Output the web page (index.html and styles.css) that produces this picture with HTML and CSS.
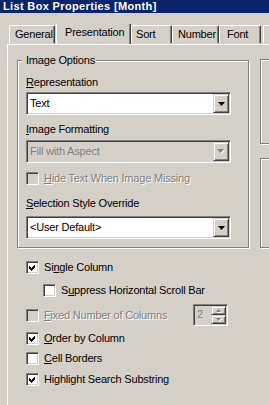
FILE: index.html
```html
<!DOCTYPE html>
<html lang="en">

<head>
    <meta charset="UTF-8">
    <title>List Box Properties [Month]</title>
    <link rel="stylesheet" href="styles.css">
</head>

<body>
    <div class="title-bar">List Box Properties [Month]</div>

    <div class="tabs">
        <div class="tab tab-general">General</div>
        <div class="tab tab-presentation active">Presentation</div>
        <div class="tab tab-sort">Sort</div>
        <div class="tab tab-number">Number</div>
        <div class="tab tab-font">Font</div>
        <div class="tab tab-more"></div>
    </div>

    <div class="panel">
        <div class="left-col">
            <div class="group image-options">
                <span class="group-title">Image Options</span>

                <div class="label label-rep"><u>R</u>epresentation</div>
                <div class="combo combo-rep">
                    <span class="combo-text">Text</span>
                    <span class="combo-btn">
                        <svg width="7" height="4" viewBox="0 0 7 4"><polygon points="0,0 7,0 3.5,4" fill="#000"/></svg>
                    </span>
                </div>

                <div class="label label-fmt"><u>I</u>mage Formatting</div>
                <div class="combo combo-fmt disabled">
                    <span class="combo-text">Fill with Aspect</span>
                    <span class="combo-btn">
                        <svg width="8" height="5" viewBox="0 0 8 5"><polygon points="1,1 8,1 4.5,5" fill="#fff"/><polygon points="0,0 7,0 3.5,4" fill="#808080"/></svg>
                    </span>
                </div>

                <div class="check-row row-hide disabled">
                    <span class="checkbox"></span>
                    <span class="check-text"><u>H</u>ide Text When Image Missing</span>
                </div>

                <div class="label label-sel"><u>S</u>election Style Override</div>
                <div class="combo combo-sel">
                    <span class="combo-text">&lt;User Default&gt;</span>
                    <span class="combo-btn">
                        <svg width="7" height="4" viewBox="0 0 7 4"><polygon points="0,0 7,0 3.5,4" fill="#000"/></svg>
                    </span>
                </div>
            </div>

            <div class="options">
                <div class="check-row row-single">
                    <span class="checkbox">
                        <svg width="7" height="7" viewBox="0 0 7 7" shape-rendering="crispEdges"><polygon points="0,2 2,4 6,0 6,3 2,7 0,5" fill="#000"/></svg>
                    </span>
                    <span class="check-text">Si<u>n</u>gle Column</span>
                </div>
                <div class="check-row row-suppress">
                    <span class="checkbox"></span>
                    <span class="check-text">S<u>u</u>ppress Horizontal Scroll Bar</span>
                </div>
                <div class="check-row row-fixed disabled">
                    <span class="checkbox"></span>
                    <span class="check-text"><u>F</u>ixed Number of Columns</span>
                    <div class="spin">
                        <span class="spin-value">2</span>
                        <div class="spin-btns">
                            <span class="spin-btn">
                                <svg width="6" height="4" viewBox="0 0 6 4"><polygon points="3,1 6,4 1,4" fill="#fff"/><polygon points="2.5,0 5,3 0,3" fill="#808080"/></svg>
                            </span>
                            <span class="spin-btn">
                                <svg width="6" height="4" viewBox="0 0 6 4"><polygon points="1,1 6,1 3.5,4" fill="#fff"/><polygon points="0,0 5,0 2.5,3" fill="#808080"/></svg>
                            </span>
                        </div>
                    </div>
                </div>
                <div class="check-row row-order">
                    <span class="checkbox">
                        <svg width="7" height="7" viewBox="0 0 7 7" shape-rendering="crispEdges"><polygon points="0,2 2,4 6,0 6,3 2,7 0,5" fill="#000"/></svg>
                    </span>
                    <span class="check-text"><u>O</u>rder by Column</span>
                </div>
                <div class="check-row row-cell">
                    <span class="checkbox"></span>
                    <span class="check-text"><u>C</u>ell Borders</span>
                </div>
                <div class="check-row row-highlight">
                    <span class="checkbox">
                        <svg width="7" height="7" viewBox="0 0 7 7" shape-rendering="crispEdges"><polygon points="0,2 2,4 6,0 6,3 2,7 0,5" fill="#000"/></svg>
                    </span>
                    <span class="check-text">Highlight Search Substring</span>
                </div>
            </div>
        </div>

        <div class="right-col">
            <div class="group side-a"></div>
            <div class="group side-b"></div>
        </div>
    </div>
</body>

</html>
```

FILE: styles.css
```css
body {
    margin: 0;
    width: 269px;
    height: 405px;
    overflow: hidden;
    background-color: #d4d0c8;
    color: #000;
    font-family: "Liberation Sans", Arial, sans-serif;
    font-size: 11px;
    line-height: 13px;
    letter-spacing: -0.2px;
}

u {
    text-underline-offset: 1px;
}

.title-bar {
    height: 13px;
    padding-left: 3px;
    background-color: #0a246a;
    color: #fff;
    font-weight: bold;
    letter-spacing: 0.35px;
    white-space: nowrap;
    overflow: hidden;
}

/* tab strip */
.tabs {
    display: flex;
    align-items: flex-end;
    height: 20px;
    margin-top: 11px;
    padding-left: 9px;
    white-space: nowrap;
    overflow: hidden;
    position: relative;
    z-index: 1;
    margin-bottom: -1px;
    padding-bottom: 1px;
}

.tab {
    box-sizing: border-box;
    flex: none;
    height: 18px;
    margin-bottom: 1px;
    padding: 2px 0 0 5px;
    border-top: 1px solid #fff;
    border-left: 1px solid #fff;
    border-right: 1px solid #404040;
    border-radius: 2px 2px 0 0;
    box-shadow: inset -1px 0 #808080;
    background-color: #d4d0c8;
}

.tab-general {
    width: 46px;
}

.tab-presentation {
    width: 75px;
    margin-left: 1px;
}

.tab.active {
    height: 21px;
    margin-bottom: 0;
    padding-left: 8px;
}

.tab-sort {
    width: 41px;
    padding-left: 4px;
}

.tab-number {
    width: 47px;
}

.tab-font {
    width: 42px;
    padding-left: 7px;
}

.tab-more {
    width: 60px;
    margin-left: 2px;
}

/* page */
.panel {
    display: flex;
    height: 345px;
    margin-left: 7px;
    padding: 15px 0 0 9px;
    border-top: 1px solid #fff;
    border-left: 1px solid #fff;
}

.left-col {
    flex: none;
    width: 232px;
}

.right-col {
    flex: 1;
    min-width: 0;
    margin-left: 11px;
    margin-top: -1px;
    padding-top: 1px;
    overflow: hidden;
}

.group {
    box-sizing: border-box;
    border: 1px solid #808080;
    box-shadow: 1px 1px 0 #fff, inset 1px 1px 0 #fff;
}

.side-a,
.side-b {
    width: 100px;
}

.side-a {
    height: 85px;
    margin-top: -1px;
}

.side-b {
    height: 90px;
    margin-top: 14px;
}

.image-options {
    display: flex;
    flex-direction: column;
    align-items: flex-start;
    padding: 0 0 8px 8px;
}

.group-title {
    margin: -7px 0 0 -4px;
    padding: 0 1px 0 4px;
    background-color: #d4d0c8;
}

.label-rep {
    margin-top: 9px;
}

.label-fmt {
    margin-top: 8px;
}

.label-sel {
    margin-top: 12px;
}

/* combo boxes */
.combo {
    box-sizing: border-box;
    display: flex;
    align-items: center;
    width: 205px;
    height: 23px;
    padding: 1px;
    border: 1px solid;
    border-color: #808080 #fff #fff #808080;
    box-shadow: inset 1px 1px #404040, inset -1px -1px #d4d0c8;
    background-color: #fff;
}

.combo-rep {
    margin-top: 3px;
}

.combo-fmt {
    margin-top: 4px;
}

.combo-sel {
    margin-top: 6px;
}

.combo-text {
    flex: 1;
    padding-left: 2px;
}

.combo-btn {
    box-sizing: border-box;
    display: flex;
    align-items: center;
    justify-content: center;
    width: 16px;
    height: 19px;
    border: 1px solid;
    border-color: #d4d0c8 #404040 #404040 #d4d0c8;
    box-shadow: inset 1px 1px #fff, inset -1px -1px #808080;
    background-color: #d4d0c8;
}

.combo.disabled {
    background-color: #d4d0c8;
    color: #808080;
}

/* check boxes */
.check-row {
    display: flex;
    align-items: center;
    gap: 5px;
    white-space: nowrap;
}

.checkbox {
    box-sizing: border-box;
    flex: none;
    display: flex;
    align-items: center;
    justify-content: center;
    width: 13px;
    height: 13px;
    border: 1px solid;
    border-color: #808080 #fff #fff #808080;
    box-shadow: inset 1px 1px #404040, inset -1px -1px #d4d0c8;
    background-color: #fff;
}

.check-row.disabled .checkbox {
    background-color: #d4d0c8;
}

.check-row.disabled .check-text {
    color: #808080;
    text-shadow: 1px 1px 0 #fff;
}

.row-hide {
    margin-top: 9px;
}

.options {
    padding-left: 9px;
}

.row-single {
    margin-top: 13px;
}

.row-suppress {
    margin-top: 10px;
    padding-left: 17px;
}

.row-fixed {
    height: 22px;
    margin-top: 7px;
    padding-right: 21px;
}

.row-order {
    margin-top: 6px;
}

.row-cell {
    margin-top: 7px;
}

.row-highlight {
    margin-top: 8px;
}

/* spinner */
.spin {
    box-sizing: border-box;
    display: flex;
    width: 35px;
    height: 22px;
    margin-left: auto;
    padding: 1px;
    border: 1px solid;
    border-color: #808080 #fff #fff #808080;
    box-shadow: inset 1px 1px #404040, inset -1px -1px #d4d0c8;
    background-color: #d4d0c8;
}

.spin-value {
    flex: 1;
    padding: 2px 0 0 2px;
    color: #808080;
}

.spin-btns {
    display: flex;
    flex-direction: column;
    width: 15px;
}

.spin-btn {
    box-sizing: border-box;
    display: flex;
    align-items: center;
    justify-content: center;
    height: 9px;
    border: 1px solid;
    border-color: #d4d0c8 #404040 #404040 #d4d0c8;
    box-shadow: inset 1px 1px #fff, inset -1px -1px #808080;
    background-color: #d4d0c8;
}
```
